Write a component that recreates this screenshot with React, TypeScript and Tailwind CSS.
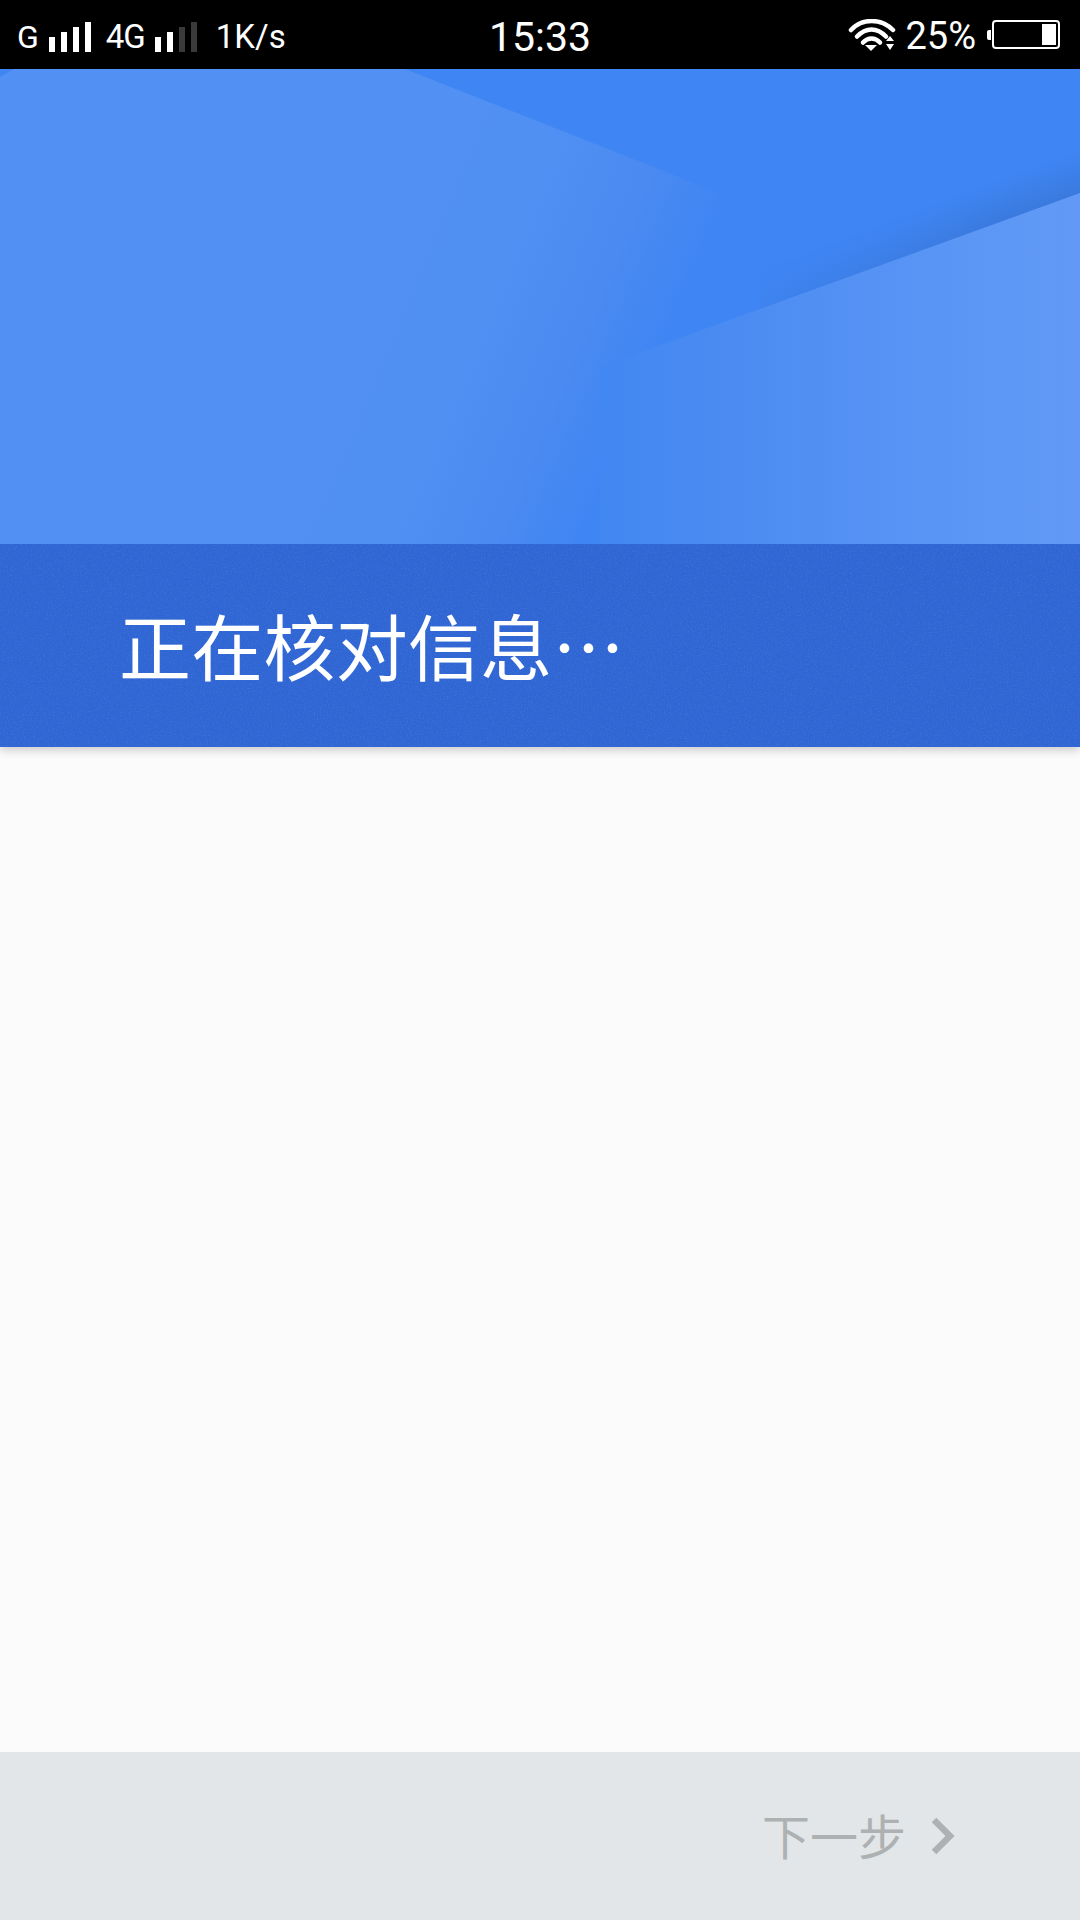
const cjk = "font-['Noto_Sans_CJK_SC','Noto_Sans',sans-serif]";
const statusFont = "font-['Roboto','Liberation_Sans',sans-serif]";

const SignalBars = ({ dim = 0 }: { dim?: number }) => {
  const heights = ["h-[15px]", "h-[20px]", "h-[25px]", "h-[30px]"];
  return (
    <div className="flex items-end gap-[6px]">
      {heights.map((h, i) => (
        <div key={h} className={`w-[6px] ${h} ${i >= 4 - dim ? "bg-[#3a3a3a]" : "bg-white"}`} />
      ))}
    </div>
  );
};

const WifiIcon = () => (
  <svg width="48" height="32" viewBox="0 0 46 32" fill="none">
    <path d="M2 11 C13 -1 32 -1 44 11" stroke="white" strokeWidth="4.5" strokeLinecap="round" />
    <path d="M8 17.5 C17 8 28 8 37 17.5" stroke="white" strokeWidth="4.5" strokeLinecap="round" />
    <path d="M14 23.5 C19 18 26 18 31 23.5" stroke="white" strokeWidth="4.5" strokeLinecap="round" />
    <path d="M16 26 L28 26 L22 32 Z" fill="white" />
    <path d="M41 17 L45 22 L37 22 Z M37 25 L45 25 L41 31 Z" fill="white" />
  </svg>
);

const Battery = () => (
  <div className="flex items-center">
    <div className="h-[10px] w-[4px] rounded-l-[2px] bg-white" />
    <div className="ml-[1px] flex h-[29px] w-[68px] justify-end rounded-[4px] border-2 border-white p-[2px]">
      <div className="w-[14px] bg-white" />
    </div>
  </div>
);

const StatusBar = () => (
  <div className={`relative flex h-[69px] items-center justify-between bg-black pl-[17px] pr-[20px] text-white ${statusFont}`}>
    <div className="flex items-center pt-[4px]">
      <span className="text-[32px] leading-none">G</span>
      <div className="ml-[10px]"><SignalBars /></div>
      <span className="ml-[15px] text-[33px] leading-none tracking-[-1px]">4G</span>
      <div className="ml-[10px]"><SignalBars dim={2} /></div>
      <span className="ml-[19px] text-[33px] leading-none">1K/s</span>
    </div>
    <span className="absolute left-[489px] top-[15px] text-[41px] leading-[44px]">15:33</span>
    <div className="flex items-center">
      <WifiIcon />
      <span className="ml-[9px] mt-[3px] text-[38px] leading-none">25%</span>
      <div className="ml-[11px]"><Battery /></div>
    </div>
  </div>
);

const HeroBackdrop = () => (
  <svg className="absolute inset-0" width="1080" height="475" viewBox="0 0 1080 475" preserveAspectRatio="none">
    <defs>
      <linearGradient id="leftPanel" gradientUnits="userSpaceOnUse" x1="400" y1="200" x2="655" y2="307">
        <stop offset="0" stopColor="#5291f3" />
        <stop offset="0.4" stopColor="#4f8ff3" />
        <stop offset="0.7" stopColor="#4a8af1" />
        <stop offset="1" stopColor="#3f85f3" />
      </linearGradient>
      <linearGradient id="rightPanel" gradientUnits="userSpaceOnUse" x1="600" y1="0" x2="1080" y2="0">
        <stop offset="0" stopColor="#4287f2" />
        <stop offset="0.3" stopColor="#4c8cf2" />
        <stop offset="0.6" stopColor="#5693f4" />
        <stop offset="0.85" stopColor="#5e98f6" />
        <stop offset="1" stopColor="#6199f5" />
      </linearGradient>
      <linearGradient id="shade" gradientUnits="userSpaceOnUse" x1="1066" y1="86" x2="1080" y2="124">
        <stop offset="0" stopColor="#3f85f3" />
        <stop offset="1" stopColor="#3a7ade" />
      </linearGradient>
      <linearGradient id="shadeFade" gradientUnits="userSpaceOnUse" x1="680" y1="0" x2="1000" y2="0">
        <stop offset="0" stopColor="#3f85f3" stopOpacity="1" />
        <stop offset="1" stopColor="#3f85f3" stopOpacity="0" />
      </linearGradient>
    </defs>
    <rect width="1080" height="475" fill="url(#shade)" />
    <rect width="1080" height="475" fill="url(#shadeFade)" />
    <path d="M0 8 L14 0 L405 0 L760 140 L760 475 L0 475 Z" fill="url(#leftPanel)" />
    <path d="M1080 124 L600 298 L600 475 L1080 475 Z" fill="url(#rightPanel)" />
  </svg>
);

const BandNoise = () => (
  <svg className="absolute inset-0 opacity-[0.12]" width="1080" height="203">
    <filter id="speckle">
      <feTurbulence type="fractalNoise" baseFrequency="0.7" numOctaves="2" seed="4" />
      <feColorMatrix values="0 0 0 0 1  0 0 0 0 1  0 0 0 0 1  1.6 0 0 0 -0.75" />
    </filter>
    <rect width="1080" height="203" filter="url(#speckle)" />
  </svg>
);

const Hero = () => (
  <header className="relative z-10 shadow-[0_3px_9px_rgba(0,0,0,0.2)]">
    <div className="relative h-[475px] overflow-hidden bg-[#3f85f3]">
      <HeroBackdrop />
    </div>
    <div className="relative flex h-[203px] items-center bg-[#2f66d4] pl-[119px] pb-[3px]">
      <BandNoise />
      <h1 className={`relative text-[72px] leading-none font-normal tracking-[0.25px] text-white ${cjk}`}>正在核对信息…</h1>
    </div>
  </header>
);

const Footer = () => (
  <footer className="flex h-[168px] items-center justify-end bg-[#e3e6e8] pr-[125px] pb-[4px] text-[#adb1b2]">
    <span className={`text-[48px] leading-none ${cjk}`}>下一步</span>
    <svg className="ml-[25px] mt-[3px]" width="24" height="38" viewBox="0 0 24 38" fill="none">
      <path d="M3 3 L19 19 L3 35" stroke="currentColor" strokeWidth="6.5" />
    </svg>
  </footer>
);

export default function App() {
  return (
    <main className="flex min-h-[1920px] w-[1080px] flex-col overflow-hidden bg-[#fbfbfb]">
      <StatusBar />
      <Hero />
      <div className="flex-1" />
      <Footer />
    </main>
  );
}
